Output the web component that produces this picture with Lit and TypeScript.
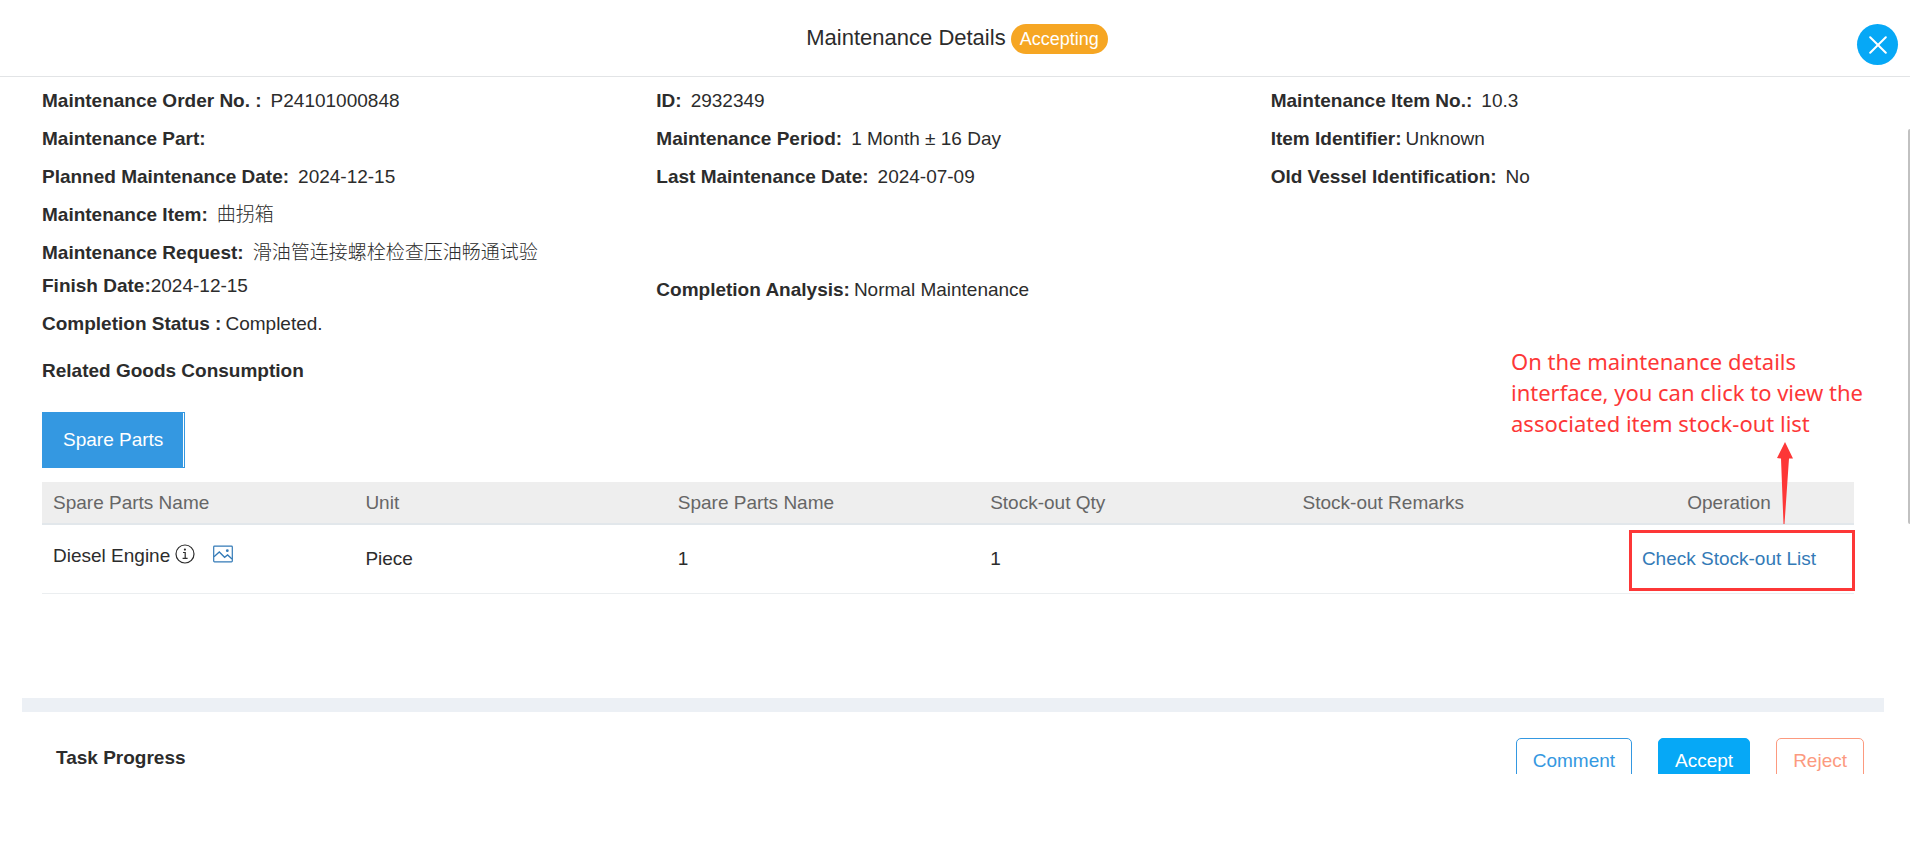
import { LitElement, html, css, nothing } from "lit";
import { customElement, property } from "lit/decorators.js";

interface Field {
  label: string;
  value: string;
  tight?: boolean;
}

interface Part {
  name: string;
  unit: string;
  model: string;
  qty: string;
  remarks: string;
}

const FIELDS: Field[] = [
  { label: "Maintenance Order No. :", value: "P24101000848" },
  { label: "ID:", value: "2932349" },
  { label: "Maintenance Item No.:", value: "10.3" },
  { label: "Maintenance Part:", value: "" },
  { label: "Maintenance Period:", value: "1 Month ± 16 Day" },
  { label: "Item Identifier:", value: "Unknown", tight: true },
  { label: "Planned Maintenance Date:", value: "2024-12-15" },
  { label: "Last Maintenance Date:", value: "2024-07-09" },
  { label: "Old Vessel Identification:", value: "No" },
];

const WIDE_FIELDS: Field[] = [
  { label: "Maintenance Item:", value: "曲拐箱" },
  { label: "Maintenance Request:", value: "滑油管连接螺栓检查压油畅通试验" },
];

const HEADINGS = ["Spare Parts Name", "Unit", "Spare Parts Name", "Stock-out Qty", "Stock-out Remarks"];

const PARTS: Part[] = [{ name: "Diesel Engine", unit: "Piece", model: "1", qty: "1", remarks: "" }];

@customElement("stock-table")
export class StockTable extends LitElement {
  @property({ attribute: false }) parts: Part[] = [];

  static styles = css`
    :host {
      display: block;
    }
    table {
      width: 100%;
      table-layout: fixed;
      border-collapse: separate;
      border-spacing: 0;
    }
    th,
    td {
      padding: 0 11px;
      text-align: left;
      font-weight: 400;
    }
    th {
      height: 41px;
      background: #eeeeee;
      border-bottom: 2px solid #e2e7eb;
      color: #666666;
    }
    td {
      height: 68px;
      border-bottom: 1px solid #ebeef0;
    }
    .operation {
      width: 250px;
      padding: 0;
      text-align: center;
      position: relative;
    }
    .part {
      display: flex;
      align-items: center;
      padding-bottom: 6px;
    }
    .icon {
      display: flex;
      padding: 0 0 4px;
      border: 0;
      background: none;
      color: #2c2c2c;
    }
    .info {
      margin-left: 5px;
      margin-right: 18px;
    }
    .picture {
      color: #337ab7;
    }
    a {
      color: #337ab7;
      text-decoration: none;
    }
    .frame {
      position: absolute;
      top: 5px;
      right: -1px;
      width: 226px;
      height: 61px;
      box-sizing: border-box;
      border: 3px solid #fd3737;
      pointer-events: none;
    }
    .arrow {
      position: absolute;
      right: 61px;
      bottom: 69px;
      pointer-events: none;
    }
    .note {
      position: absolute;
      right: -24px;
      bottom: 154px;
      width: 367px;
      margin: 0;
      color: #fd3737;
      font: 22px/31px "Noto Sans", "Open Sans", sans-serif;
      text-align: left;
      pointer-events: none;
    }
  `;

  render() {
    return html`
      <table>
        <thead>
          <tr>
            ${HEADINGS.map((h) => html`<th scope="col">${h}</th>`)}
            <th scope="col" class="operation">Operation</th>
          </tr>
        </thead>
        <tbody>
          ${this.parts.map(
            (p, i) => html`
              <tr>
                <td>
                  <div class="part">
                    ${p.name}
                    <button class="icon info" type="button" aria-label="Part information">
                      <svg width="20" height="20" viewBox="0 0 20 20" fill="none" stroke="currentColor">
                        <circle cx="10" cy="10" r="9" stroke-width="1.2" />
                        <path d="M8 8.5h2.2v5.7M7.6 14.4h5" stroke-width="1.2" />
                        <circle cx="9.9" cy="5.6" r="1.1" fill="currentColor" stroke="none" />
                      </svg>
                    </button>
                    <button class="icon picture" type="button" aria-label="Part picture">
                      <svg width="20" height="18" viewBox="0 0 20 18" fill="none" stroke="currentColor">
                        <rect x="0.7" y="1.2" width="18.6" height="15.6" rx="0.8" stroke-width="1.2" />
                        <path d="M1 11.8L6.3 7l5.3 5.3 3-2.4 4.4 4" stroke-width="1.3" />
                        <circle cx="14.3" cy="5.7" r="1.4" fill="currentColor" stroke="none" />
                      </svg>
                    </button>
                  </div>
                </td>
                <td>${p.unit}</td>
                <td>${p.model}</td>
                <td>${p.qty}</td>
                <td>${p.remarks}</td>
                <td class="operation">
                  <a href="#stock-out">Check Stock-out List</a>
                  ${i === 0
                    ? html`
                        <span class="frame"></span>
                        <svg class="arrow" width="16" height="82" viewBox="0 0 16 82" fill="#fd3737">
                          <path d="M8 0L16 16.5H12L7.5 82H6.5L4 16.5L0 16Z" />
                        </svg>
                        <p class="note">
                          On the maintenance details interface, you can click to view the associated item
                          stock-out list
                        </p>
                      `
                    : nothing}
                </td>
              </tr>
            `
          )}
        </tbody>
      </table>
    `;
  }
}

@customElement("app-root")
export class AppRoot extends LitElement {
  static styles = css`
    :host {
      display: flex;
      flex-direction: column;
      box-sizing: border-box;
      height: 100vh;
      padding-bottom: 93px;
      position: relative;
      overflow: hidden;
      background: #ffffff;
      color: #2c2c2c;
      font: 19px/22px "Liberation Sans", "Noto Sans CJK SC", Arial, sans-serif;
    }
    button {
      font: inherit;
      cursor: pointer;
    }
    header {
      flex: none;
      display: flex;
      justify-content: center;
      align-items: center;
      gap: 5px;
      height: 76px;
      padding-left: 4px;
      border-bottom: 1px solid #e2e4e6;
    }
    h1 {
      margin: 0;
      font-size: 22px;
      font-weight: 400;
      line-height: 30px;
    }
    .badge {
      margin-top: 2px;
      padding: 0 9px;
      border-radius: 15px;
      background: #f6a623;
      color: #ffffff;
      font-size: 18px;
      line-height: 30px;
    }
    .close {
      position: absolute;
      top: 24px;
      right: 12px;
      display: grid;
      place-items: center;
      width: 41px;
      height: 41px;
      padding: 0;
      border: 0;
      border-radius: 50%;
      background: #06a8f6;
    }
    main {
      flex: 1;
      min-height: 0;
      overflow: hidden;
    }
    .thumb {
      position: absolute;
      top: 129px;
      right: 0;
      width: 2px;
      height: 395px;
      border-radius: 2px 0 0 2px;
      background: #c1c1c1;
    }
    .fields {
      display: grid;
      grid-template-columns: repeat(3, 1fr);
      margin: 5px 25px 0 42px;
      line-height: 38px;
    }
    .wide {
      grid-column: 1 / -1;
      font-weight: 300;
    }
    .result {
      margin-top: -5px;
    }
    .analysis {
      padding-top: 4px;
    }
    .label {
      font-weight: 700;
      margin-right: 9px;
    }
    .tight {
      margin-right: 4px;
    }
    .joined {
      margin-right: 0;
    }
    .goods {
      margin: 17px 56px 0 42px;
    }
    h2 {
      margin: 0;
      font-size: 19px;
      line-height: 22px;
    }
    .tabs {
      display: inline-flex;
      margin: 30px 0 14px;
      border: 1px solid #3498e1;
    }
    .tab {
      height: 54px;
      padding: 0 20px;
      border: 0;
      border-right: 1px solid #ffffff;
      background: #3498e1;
      color: #ffffff;
    }
    .tabs,
    stock-table {
      vertical-align: top;
    }
    .divider {
      height: 14px;
      margin: 104px 26px 0 22px;
      border: 0;
      background: #ecf0f5;
    }
    .task {
      display: flex;
      justify-content: space-between;
      align-items: flex-start;
      padding: 26px 46px 0 56px;
    }
    .task h2 {
      margin-top: 9px;
    }
    .actions {
      display: flex;
      gap: 26px;
    }
    .action {
      height: 46px;
      padding: 0 16px;
      border: 1px solid #3498e1;
      border-radius: 5px;
      background: #ffffff;
      color: #3498e1;
    }
    .accept {
      border-color: #06a8f6;
      background: #06a8f6;
      color: #ffffff;
    }
    .reject {
      border-color: #fc9a7f;
      color: #fc9a7f;
    }
  `;

  private field(f: Field, extra = "") {
    return html`<div class=${extra}>
      <span class="label ${f.tight ? "tight" : ""}">${f.label}</span>${f.value}
    </div>`;
  }

  render() {
    return html`
      <header>
        <h1>Maintenance Details</h1>
        <span class="badge">Accepting</span>
      </header>
      <button class="close" type="button" aria-label="Close">
        <svg width="18" height="18" viewBox="0 0 18 18" stroke="#fff" stroke-width="2" stroke-linecap="round">
          <path d="M1.2 1.2L16.8 16.8M16.8 1.2L1.2 16.8" />
        </svg>
      </button>
      <main>
        <section class="fields">
          ${FIELDS.map((f) => this.field(f))} ${WIDE_FIELDS.map((f) => this.field(f, "wide"))}
        </section>
        <section class="fields result">
          <div>
            <div><span class="label joined">Finish Date:</span>2024-12-15</div>
            <div><span class="label tight">Completion Status :</span>Completed.</div>
          </div>
          <div class="analysis"><span class="label tight">Completion Analysis:</span>Normal Maintenance</div>
        </section>
        <section class="goods">
          <h2>Related Goods Consumption</h2>
          <div class="tabs"><button class="tab" type="button">Spare Parts</button></div>
          <stock-table .parts=${PARTS}></stock-table>
        </section>
        <hr class="divider" />
        <section class="task">
          <h2>Task Progress</h2>
          <div class="actions">
            <button class="action" type="button">Comment</button>
            <button class="action accept" type="button">Accept</button>
            <button class="action reject" type="button">Reject</button>
          </div>
        </section>
      </main>
      <div class="thumb"></div>
    `;
  }
}
